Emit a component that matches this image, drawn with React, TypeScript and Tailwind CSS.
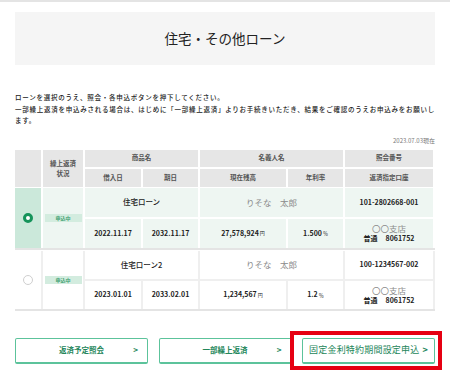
import React from "react";

const COLS = "grid grid-cols-[26px_40px_56px_55px_86px_55px_88px]";

function Radio({ on }: { on: boolean }) {
  return on ? (
    <div className="w-[10px] h-[10px] rounded-full border-[3px] border-[#15935a] bg-white" />
  ) : (
    <div className="w-[10px] h-[10px] rounded-full border border-[#cfcfcf] bg-white" />
  );
}

function Badge() {
  return (
    <div className="w-[37px] h-[8px] bg-[#d3ecdf] text-[#3f9f70] text-[5px] leading-[8px] text-center font-bold">
      申込中
    </div>
  );
}

type Row = {
  on: boolean;
  name: string;
  acct: string;
  d1: string;
  d2: string;
  bal: string;
  rate: string;
};

function BodyRow({ r }: { r: Row }) {
  const cell = r.on ? "bg-[#eef6f2]" : "bg-white";
  const rows = r.on ? "grid-rows-[29px_29px] bg-white" : "grid-rows-[28px_28px] bg-[#efefef]";
  return (
    <div className="border-b-2 border-[#e4e4e4] mt-px">
      <div className={`${COLS} ${rows} gap-[2px]`}>
        <div className={`row-span-2 flex items-center justify-center ${r.on ? "bg-[#cbe8da]" : "bg-white"}`}>
          <Radio on={r.on} />
        </div>
        <div className={`row-span-2 flex items-center justify-center ${cell}`}>
          <Badge />
        </div>
        <div className={`col-span-2 flex items-center justify-center text-[7.5px] font-medium text-[#222] ${cell}`}>
          {r.name}
        </div>
        <div className={`col-span-2 flex items-center justify-center text-[8.5px] text-[#8a8a8a] ${cell}`}>
          りそな　太郎
        </div>
        <div className={`flex items-center justify-center text-[7px] font-bold text-[#222] ${cell}`}>
          {r.acct}
        </div>
        <div className={`flex items-center justify-center text-[7px] font-bold text-[#222] ${cell}`}>{r.d1}</div>
        <div className={`flex items-center justify-center text-[7px] font-bold text-[#222] ${cell}`}>{r.d2}</div>
        <div className={`flex items-center justify-center text-[7px] font-bold text-[#222] ${cell}`}>
          {r.bal}
          <span className="text-[5px] font-normal ml-[1px]">円</span>
        </div>
        <div className={`flex items-center justify-center text-[7px] font-bold text-[#222] ${cell}`}>
          {r.rate}
          <span className="text-[5px] font-normal ml-[1px]">％</span>
        </div>
        <div className={`flex flex-col items-center justify-center ${cell}`}>
          <div className="text-[8.5px] leading-[10px] text-[#8a8a8a]">〇〇支店</div>
          <div className="text-[7px] leading-[10px] font-bold text-[#222]">
            普通<span className="ml-[8px]">8061752</span>
          </div>
        </div>
      </div>
    </div>
  );
}

function Btn({ label, big }: { label: string; big?: boolean }) {
  return (
    <div className="relative w-[133px] h-[26px] rounded-[2px] border border-[#5cc39b] border-b-2 bg-white flex items-center justify-center text-[#23865a]">
      {big ? (
        <span className="text-[9px] tracking-[0.2px]">
          {label}
          <span className="ml-[3px] font-bold">&gt;</span>
        </span>
      ) : (
        <>
          <span className="text-[7.5px] font-bold">{label}</span>
          <span className="absolute right-[9px] text-[8px] font-bold">&gt;</span>
        </>
      )}
    </div>
  );
}

export default function App() {
  const rows: Row[] = [
    { on: true, name: "住宅ローン", acct: "101-2802668-001", d1: "2022.11.17", d2: "2032.11.17", bal: "27,578,924", rate: "1.500" },
    { on: false, name: "住宅ローン2", acct: "100-1234567-002", d1: "2023.01.01", d2: "2033.02.01", bal: "1,234,567", rate: "1.2" },
  ];
  const hc = "bg-[#e6e6e6] flex items-center justify-center text-[6.5px] font-bold text-[#555]";
  return (
    <div className="relative w-[450px] h-[370px] overflow-hidden bg-white font-['Noto_Sans_CJK_JP','Noto_Sans',sans-serif]">
      <div className="h-[2px] bg-[#e4e4e4]" />
      <div className="px-[15px]">
        <div className="mt-[10px] h-[53px] bg-[#f5f5f5] flex items-center justify-center text-[13.5px] text-[#222]">
          住宅・その他ローン
        </div>
        <div className="mt-[27px] text-[6.5px] leading-[11.5px] tracking-[0.75px] text-[#222] font-medium whitespace-nowrap">
          <div>ローンを選択のうえ、照会・各申込ボタンを押下してください。</div>
          <div>一部繰上返済を申込みされる場合は、はじめに「一部繰上返済」よりお手続きいただき、結果をご確認のうえお申込みをお願いし</div>
          <div>ます。</div>
        </div>
        <div className="mt-[9px] h-[10px] text-right text-[6px] leading-[10px] text-[#777]">2023.07.03現在</div>
        <div className="mt-[4px]">
          <div className={`${COLS} grid-rows-[17px_18px] gap-[2px] bg-white`}>
            <div className={`row-span-2 ${hc}`} />
            <div className={`row-span-2 ${hc} flex-col leading-[10px]`}>
              <div>繰上返済</div>
              <div>状況</div>
            </div>
            <div className={`col-span-2 ${hc}`}>商品名</div>
            <div className={`col-span-2 ${hc}`}>名義人名</div>
            <div className={hc}>照会番号</div>
            <div className={hc}>借入日</div>
            <div className={hc}>期日</div>
            <div className={hc}>現在残高</div>
            <div className={hc}>年利率</div>
            <div className={hc}>返済指定口座</div>
          </div>
          {rows.map((r) => (
            <BodyRow key={r.acct} r={r} />
          ))}
        </div>
        <div className="mt-[27px] flex justify-between">
          <Btn label="返済予定照会" />
          <Btn label="一部繰上返済" />
          <Btn label="固定金利特約期間設定申込" big />
        </div>
      </div>
      <div className="absolute left-[290px] top-[331px] w-[152px] h-[39px] border-4 border-[#e60012]" />
    </div>
  );
}
